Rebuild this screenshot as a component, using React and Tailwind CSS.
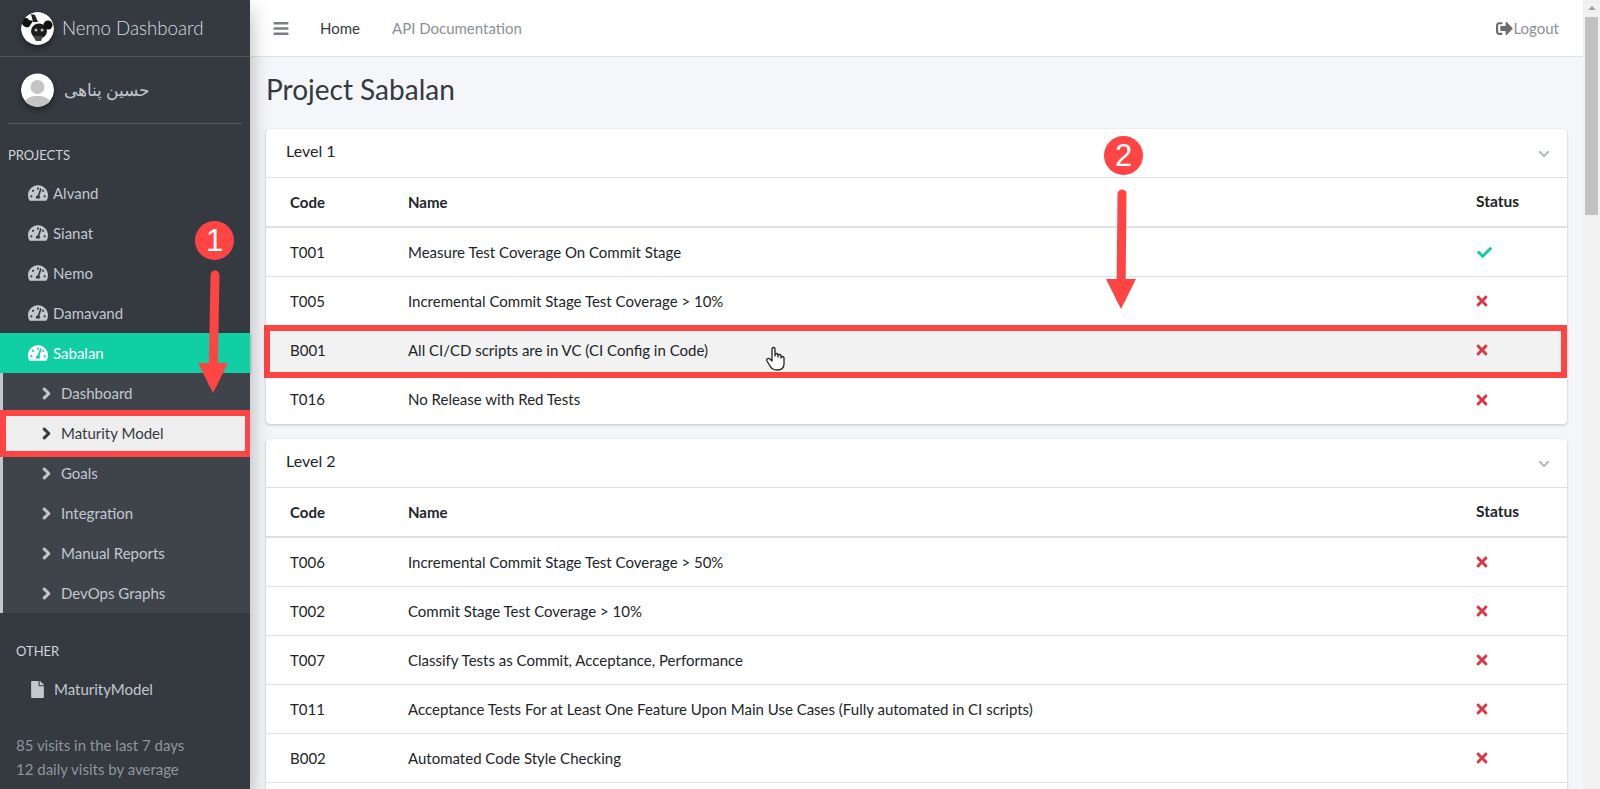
import React from "react";
import { FaTachometerAlt, FaChevronRight, FaChevronDown, FaFile, FaBars, FaSignOutAlt, FaCheck, FaTimes } from "react-icons/fa";

const projects = ["Alvand", "Sianat", "Nemo", "Damavand"];
const subs = ["Dashboard", "Maturity Model", "Goals", "Integration", "Manual Reports", "DevOps Graphs"];
const level1 = [
  ["T001", "Measure Test Coverage On Commit Stage", true],
  ["T005", "Incremental Commit Stage Test Coverage > 10%", false],
  ["B001", "All CI/CD scripts are in VC (CI Config in Code)", false, true],
  ["T016", "No Release with Red Tests", false],
];
const level2 = [
  ["T006", "Incremental Commit Stage Test Coverage > 50%", false],
  ["T002", "Commit Stage Test Coverage > 10%", false],
  ["T007", "Classify Tests as Commit, Acceptance, Performance", false],
  ["T011", "Acceptance Tests For at Least One Feature Upon Main Use Cases (Fully automated in CI scripts)", false],
  ["B002", "Automated Code Style Checking", false],
  ["", "", null],
];

function Logo() {
  return (
    <svg width="33" height="33" viewBox="0 0 33 33" className="shrink-0 rounded-full shadow-[0_3px_6px_rgba(0,0,0,0.4)]">
      <circle cx="16.5" cy="16.5" r="16.5" fill="#fff" />
      <ellipse cx="18" cy="19" rx="8" ry="7.500" fill="#1c1c1c" />
      <circle cx="27" cy="13" r="4.500" fill="#111" />
      <path d="M0.500 9 C2 5 6 5 8 8 L12 9 L8 15 C4 16 1 14 0.500 9 Z" fill="#111" />
      <path d="M10 2 L14 3 L17 10 L12 10 Z" fill="#222" />
      <circle cx="15" cy="18" r="1.500" fill="#bbb" />
      <circle cx="21" cy="18" r="1.500" fill="#bbb" />
      <path d="M12 24 L22 24 L20 29 L15 29 Z" fill="#444" />
    </svg>
  );
}

function Avatar() {
  return (
    <svg width="33" height="34" viewBox="0 0 33 34" className="shrink-0 rounded-full shadow-[0_3px_6px_rgba(0,0,0,0.4)]">
      <circle cx="16.5" cy="17" r="16.5" fill="#fff" />
      <circle cx="16.5" cy="14" r="7" fill="#c4c4c4" />
      <path d="M4 29 C6 24 11 23 16.5 23 C22 23 27 24 29 29 C26 32 21 34 16.5 34 C12 34 7 32 4 29 Z" fill="#c4c4c4" />
    </svg>
  );
}

function SideItem({ label, active }) {
  return (
    <div className={`flex h-10 items-center pl-[28px] ${active ? "bg-[#11cfa5] text-white shadow-[0_1px_3px_rgba(0,0,0,0.3)]" : "text-[#c2c7d0]"}`}>
      <FaTachometerAlt className="h-[18px] w-[20px] shrink-0" />
      <span className="ml-[5px]">{label}</span>
    </div>
  );
}

function Table({ title, rows }) {
  return (
    <div className="mb-[15px] rounded-[4px] bg-white shadow-[0_0_1px_rgba(0,0,0,0.125),0_1px_3px_rgba(0,0,0,0.2)]">
      <div className="flex h-[49px] items-center justify-between border-b border-[#dee2e6] pb-[4px] pl-[20px] pr-[17px]">
        <span className="text-[16px] text-[#212529]">{title}</span>
        <FaChevronDown className="mt-[6px] h-[12px] w-[12px] text-[#adb5bd]" />
      </div>
      <div className="flex h-[50px] items-center border-b-2 border-[#dee2e6] font-bold text-[#212529]">
        <span className="w-[142px] pl-[24px]">Code</span>
        <span className="flex-1">Name</span>
        <span className="w-[91px] text-[15.500px]">Status</span>
      </div>
      {rows.map(([code, name, ok, hover], i) => (
        <div key={code || "blank"} className={`flex h-[49px] items-center text-[#212529] ${i < rows.length - 1 ? "border-b border-[#dee2e6]" : ""} ${hover ? "bg-[#f2f2f2]" : ""}`}>
          <span className="w-[142px] pl-[24px]">{code}</span>
          <span className="flex-1">{name}</span>
          <span className="flex w-[91px] items-center">
            {ok === true && <FaCheck className="h-[15px] w-[17px] text-[#17c9a0]" />}
            {ok === false && <FaTimes className="h-[16px] w-[12px] text-[#dc3545]" />}
          </span>
        </div>
      ))}
    </div>
  );
}

function Arrow({ className, width, height, x1, y1, x2, y2 }) {
  return (
    <svg width={width} height={height} viewBox={`0 0 ${width} ${height}`} className={className}>
      <line x1={x1} y1={y1} x2={x2} y2={y2 - 10} stroke="#ff4444" strokeWidth="9" strokeLinecap="round" />
      <polygon points={`${x2 - 15},${y2 - 30} ${x2 + 15},${y2 - 30} ${x2},${y2}`} fill="#ff4444" />
    </svg>
  );
}

function Badge({ className, children }) {
  return (
    <div className={`absolute flex h-[39px] w-[39px] items-center justify-center rounded-full bg-[#ff4444] text-[31px] leading-none text-white ${className}`} style={{ fontFamily: '"Liberation Sans", sans-serif' }}>
      {children}
    </div>
  );
}

export default function App() {
  return (
    <div className="relative flex h-[789px] w-[1600px] overflow-hidden bg-[#f4f6f9] text-[15px]" style={{ fontFamily: 'Lato, "Noto Sans", sans-serif' }}>
      <aside className="relative z-10 flex h-full w-[250px] shrink-0 flex-col bg-[#343a40] shadow-[0_10px_20px_rgba(0,0,0,0.3)]">
        <div className="flex h-[57px] items-center border-b border-[#4b545c] pl-[21px]">
          <Logo />
          <span className="ml-[8px] text-[18.700px] font-light text-[#d9dde2]">Nemo Dashboard</span>
        </div>
        <div className="mx-[8px] flex h-[67px] items-center border-b border-[#4f5962] pl-[13px]">
          <Avatar />
          <span className="ml-[10px] text-[16.500px] font-light text-[#c2c7d0]" style={{ fontFamily: '"Noto Sans", sans-serif' }} dir="rtl">حسین پناهی</span>
        </div>
        <div className="flex h-[49px] items-end pb-[8px] pl-[8px] text-[13px] text-[#d0d4db]">PROJECTS</div>
        {projects.map((p) => <SideItem key={p} label={p} />)}
        <SideItem label="Sabalan" active />
        <div className="border-l-[3px] border-[#c2c7d0] bg-[#3f444b]">
          {subs.map((s, i) => (
            <div key={s} className={`flex h-10 items-center pl-[38px] ${i === 1 ? "bg-[#eeeeee] text-[#343a40]" : "text-[#c2c7d0]"}`}>
              <FaChevronRight className="h-[13px] w-[11px] shrink-0 stroke-current stroke-[40]" />
              <span className="ml-[9px]">{s}</span>
            </div>
          ))}
        </div>
        <div className="flex h-[56px] items-end pb-[8px] pl-[16px] text-[13px] text-[#d0d4db]">OTHER</div>
        <div className="flex h-[40px] items-center pl-[31px] text-[#c2c7d0]">
          <FaFile className="h-[17px] w-[13px]" />
          <span className="ml-[10px]">MaturityModel</span>
        </div>
        <div className="mt-[24px] pl-[16px] leading-[24px] text-[#8f959b]">
          <div>85 visits in the last 7 days</div>
          <div>12 daily visits by average</div>
        </div>
      </aside>

      <main className="flex h-full min-w-0 flex-1 flex-col">
        <nav className="flex h-[57px] shrink-0 items-center border-b border-[#dee2e6] bg-white pl-[23px] pr-[24px]">
          <FaBars className="h-[17px] w-[16px] text-[#7a7f85]" />
          <span className="ml-[31px] text-[#343a40]">Home</span>
          <span className="ml-[32px] text-[#8b9096]">API Documentation</span>
          <span className="ml-auto flex items-center text-[#8b9096]"><FaSignOutAlt className="h-[17px] w-[17px] text-[#6c6c6c]" />Logout</span>
        </nav>
        <div className="min-h-0 flex-1 overflow-hidden px-[16px]">
          <h1 className="flex h-[72px] items-center pb-[9px] text-[28px] font-normal text-[#343a40]">Project Sabalan</h1>
          <Table title="Level 1" rows={level1} />
          <Table title="Level 2" rows={level2} />
        </div>
      </main>

      <div className="flex h-full w-[17px] shrink-0 flex-col items-center bg-[#f1f1f1]">
        <div className="mt-[6px] h-0 w-0 border-x-[4px] border-b-[4px] border-x-transparent border-b-[#a3a3a3]" />
        <div className="mt-[7px] h-[198px] w-[13px] bg-[#c1c1c1]" />
      </div>

      <Badge className="z-20 left-[195px] top-[221px]">1</Badge>
      <Arrow className="absolute z-20 left-[195px] top-[265px]" width={40} height={130} x1={20} y1={10} x2={18} y2={128} />
      <div className="absolute z-20 left-0 top-[410px] h-[47px] w-[250px] border-[6px] border-r-[5px] border-[#ff4444]" />

      <Badge className="left-[1104px] top-[136px]">2</Badge>
      <Arrow className="absolute left-[1102px] top-[184px]" width={40} height={127} x1={20} y1={10} x2={19} y2={125} />
      <div className="absolute left-[264px] top-[325px] h-[53px] w-[1303px] border-[6px] border-[#ff4444]" />

      <svg width="20" height="25" viewBox="0 0 20 25" className="absolute left-[766px] top-[346px]">
        <path d="M6 13 V3 a1.5 1.5 0 0 1 3 0 V10 V9 a1.5 1.5 0 0 1 3 0 V11 V10 a1.5 1.5 0 0 1 3 0 V12 a1.4 1.4 0 0 1 3 0 V18 C18 22 15 24 11 24 C7 24 5 22 4 20 L1 15 C0 13 2 11.500 4 13 L6 15 Z" fill="#fff" stroke="#222" strokeWidth="1.300" strokeLinejoin="round" />
      </svg>
    </div>
  );
}
